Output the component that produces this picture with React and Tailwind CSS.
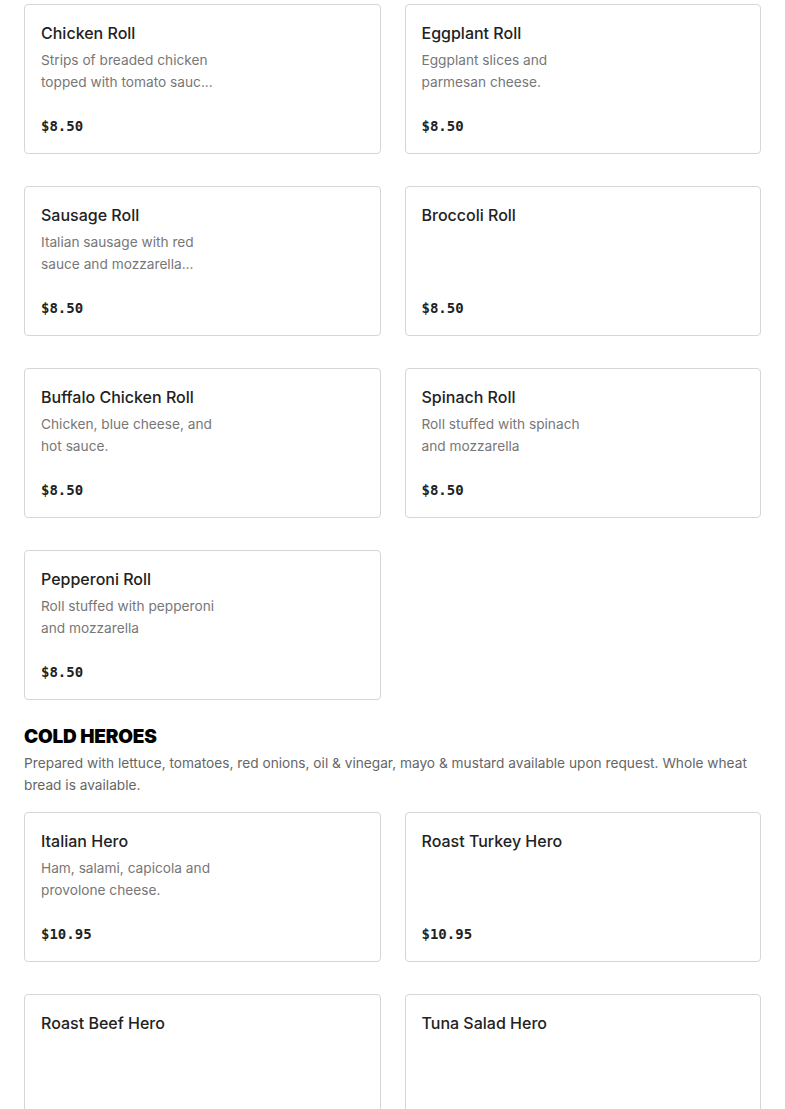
const rolls = [
  { name: "Chicken Roll", desc: ["Strips of breaded chicken", "topped with tomato sauc..."], price: "$8.50" },
  { name: "Eggplant Roll", desc: ["Eggplant slices and", "parmesan cheese."], price: "$8.50" },
  { name: "Sausage Roll", desc: ["Italian sausage with red", "sauce and mozzarella..."], price: "$8.50" },
  { name: "Broccoli Roll", desc: [], price: "$8.50" },
  { name: "Buffalo Chicken Roll", desc: ["Chicken, blue cheese, and", "hot sauce."], price: "$8.50" },
  { name: "Spinach Roll", desc: ["Roll stuffed with spinach", "and mozzarella"], price: "$8.50" },
  { name: "Pepperoni Roll", desc: ["Roll stuffed with pepperoni", "and mozzarella"], price: "$8.50" },
];

const heroes = [
  { name: "Italian Hero", desc: ["Ham, salami, capicola and", "provolone cheese."], price: "$10.95" },
  { name: "Roast Turkey Hero", desc: [], price: "$10.95" },
  { name: "Roast Beef Hero", desc: [], price: "$10.95" },
  { name: "Tuna Salad Hero", desc: [], price: "$10.95" },
];

function ItemCard({ item }) {
  return (
    <div className="h-[150px] flex flex-col border border-[#d6d6d6] rounded-[4px] bg-white p-4">
      <h3 className="text-[16px] leading-6 font-medium text-[#222]">{item.name}</h3>
      <div className="mt-1 text-[13.7px] leading-[22px] text-[#777]">
        {item.desc.map((line) => (
          <p key={line}>{line}</p>
        ))}
      </div>
      <p className="mt-auto text-[14px] leading-[22px] font-bold text-[#222] font-['DejaVu_Sans_Mono',monospace]">
        {item.price}
      </p>
    </div>
  );
}

export default function App() {
  return (
    <div className="bg-white min-h-screen px-6 pt-1 font-['Inter','Noto_Sans',sans-serif]">
      <div className="grid grid-cols-2 gap-x-6 gap-y-8">
        {rolls.map((item) => (
          <ItemCard key={item.name} item={item} />
        ))}
      </div>

      {/* Cold heroes section */}
      <h2 className="mt-[25px] text-[19px] leading-6 font-black text-black uppercase tracking-[-0.01em]">Cold Heroes</h2>
      <p className="mt-[3px] text-[13.7px] leading-[22px] text-[#666]">
        Prepared with lettuce, tomatoes, red onions, oil &amp; vinegar, mayo &amp; mustard available upon request. Whole wheat bread is available.
      </p>
      <div className="mt-4 grid grid-cols-2 gap-x-6 gap-y-8 pb-8">
        {heroes.map((item) => (
          <ItemCard key={item.name} item={item} />
        ))}
      </div>
    </div>
  );
}
